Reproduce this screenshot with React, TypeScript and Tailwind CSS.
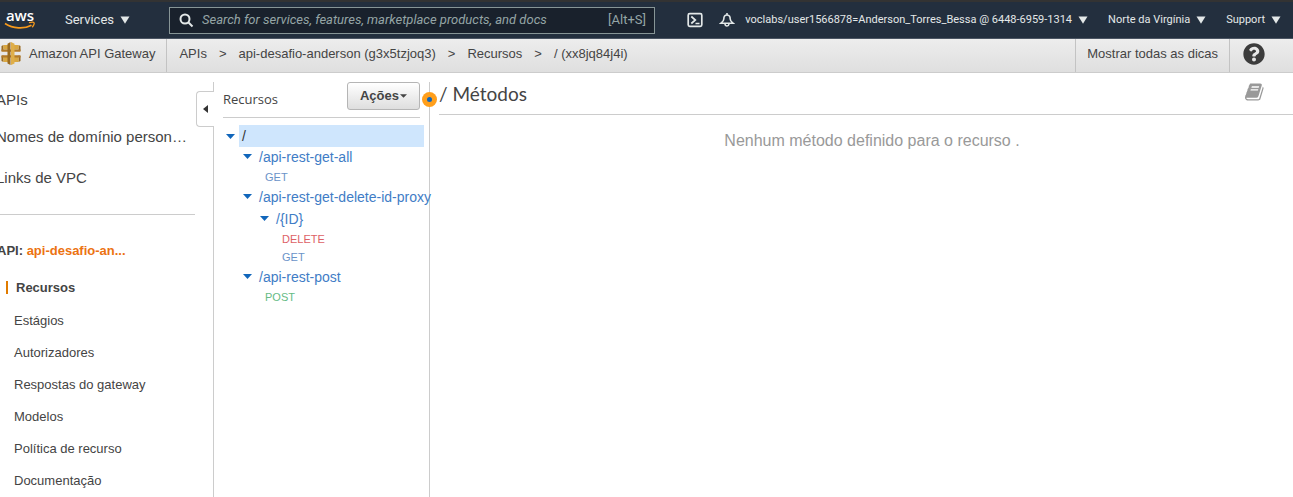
import { FaQuestionCircle } from "react-icons/fa";

type Resource = {
  kind: "resource";
  path: string;
  indent: string;
  selected?: boolean;
};
type Method = { kind: "method"; name: string; indent: string; color: string };
type TreeRow = Resource | Method;

const tree: TreeRow[] = [
  { kind: "resource", path: "/", indent: "pl-0", selected: true },
  { kind: "resource", path: "/api-rest-get-all", indent: "pl-[17px]" },
  { kind: "method", name: "GET", indent: "pl-[39px]", color: "text-[#6a93c8]" },
  { kind: "resource", path: "/api-rest-get-delete-id-proxy", indent: "pl-[17px]" },
  { kind: "resource", path: "/{ID}", indent: "pl-[34px]" },
  { kind: "method", name: "DELETE", indent: "pl-[56px]", color: "text-[#dd6166]" },
  { kind: "method", name: "GET", indent: "pl-[56px]", color: "text-[#6a93c8]" },
  { kind: "resource", path: "/api-rest-post", indent: "pl-[17px]" },
  { kind: "method", name: "POST", indent: "pl-[39px]", color: "text-[#66bb85]" },
];

const apiLinks = [
  "Estágios",
  "Autorizadores",
  "Respostas do gateway",
  "Modelos",
  "Política de recurso",
  "Documentação",
];

const crumbs = ["APIs", "api-desafio-anderson (g3x5tzjoq3)", "Recursos", "/ (xx8jq84j4i)"];

function Triangle() {
  return (
    <svg viewBox="0 0 10 8" className="h-2 w-[10px] fill-current" aria-hidden="true">
      <path d="M.5.5h9L5 7.8z" />
    </svg>
  );
}

function AwsLogo() {
  return (
    <a href="#" className="flex w-8 flex-col items-center font-['Open_Sans','Noto_Sans',sans-serif] text-[15px] leading-3 font-semibold text-white">
      <span>aws</span>
      <svg viewBox="0 0 32 10" className="h-[10px] w-8 fill-none stroke-[#f79a1c]" aria-hidden="true">
        <path d="M1 2.500C9 7.800 20 8.300 27.500 4.200" strokeWidth="1.700" />
        <path d="M25 1.700c2.500-.7 4.600-.7 5 0s-.3 2.900-1.700 4.500" strokeWidth="1.300" />
      </svg>
    </a>
  );
}

function GatewayIcon() {
  return (
    <svg viewBox="0 0 20 23" className="h-[23px] w-5 shrink-0" aria-hidden="true">
      <path fill="#9a6b21" d="M.5 4l2-1v6h-2zM.5 14l2-.5v6.500l-2-1zM19.500 4l-2-1v6h2zM19.500 14l-2-.5v6.500l2-1z" />
      <path fill="#d9a741" d="M2.500 3H7v4.500H2.500zM2.500 15H7v5H2.500zM13 3h4.500v4.500H13zM13 15h4.500v5H13z" />
      <path fill="#b27a29" d="M.5 7.500h19v2.300H.5zM.5 13.200h19v2.300H.5z" />
      <path fill="#9a6b21" d="M6.500 1.800L9.500 0v23l-3-1.500z" />
      <path fill="#dfae49" d="M10 0l3.500 1.800v19.700L10 23z" />
    </svg>
  );
}

function TopBar() {
  return (
    <header className="flex h-[39px] items-center border-t-2 border-b border-t-[#333] border-b-[#4b5563] bg-[#232f3e] pr-3 pl-1 font-[Roboto,sans-serif] text-[#e3e8e8]">
      <AwsLogo />
      <button type="button" className="ml-[29px] flex items-center gap-[6px] text-[13px]">
        Services <Triangle />
      </button>
      <div className="ml-[39px] flex h-[27px] max-w-[486px] flex-1 items-center border border-[#879596] bg-[#19212c] px-2 text-[#95a5a6]">
        <svg viewBox="0 0 16 16" className="mr-2 size-4 fill-none stroke-[#e3e8e8] stroke-2" aria-hidden="true">
          <circle cx="7" cy="7" r="4.500" />
          <path d="M10.500 10.500l4 4" />
        </svg>
        <input
          type="search"
          aria-label="Search"
          placeholder="Search for services, features, marketplace products, and docs"
          className="min-w-0 flex-1 bg-transparent text-[13px] text-white italic outline-none placeholder:text-[#95a5a6]"
        />
        <span className="text-[13px]">[Alt+S]</span>
      </div>
      <div className="ml-auto flex items-center text-[11px] whitespace-nowrap">
        <button type="button" aria-label="CloudShell" className="mr-4">
          <svg viewBox="0 0 16 16" className="size-4 fill-none stroke-current stroke-[1.700]">
            <rect x="1.200" y="1.700" width="13.600" height="12.600" rx="1.500" />
            <path d="M4.300 4.500l4 3.500-4 3.500M8.500 11.500h4" />
          </svg>
        </button>
        <button type="button" aria-label="Notifications" className="mr-[10px]">
          <svg viewBox="0 0 16 16" className="size-4 fill-none stroke-current stroke-[1.600]">
            <path d="M8 3C5.500 3 4.800 5 4.800 7c0 1.800-.6 2.600-2.800 4.200h12c-2.200-1.600-2.800-2.400-2.800-4.200 0-2-.7-4-3.200-4zM8 1v2M6 12c.3 2.600 3.700 2.600 4 0" />
          </svg>
        </button>
        <button type="button" className="flex items-center gap-[6px]">
          voclabs/user1566878=Anderson_Torres_Bessa @ 6448-6959-1314 <Triangle />
        </button>
        <button type="button" className="ml-5 flex items-center gap-[6px]">
          Norte da Virgínia <Triangle />
        </button>
        <button type="button" className="ml-5 flex items-center gap-[6px]">
          Support <Triangle />
        </button>
      </div>
    </header>
  );
}

function BreadcrumbBar() {
  return (
    <div className="flex h-[34px] items-stretch border-b border-[#ccc] bg-linear-to-b from-[#ededed] to-[#dfdfdf] text-[13px] whitespace-nowrap">
      <a href="#" className="flex items-center gap-2 border-r border-[#c3c3c3] pr-[11px] pb-1 pl-[1px]">
        <GatewayIcon />
        Amazon API Gateway
      </a>
      <nav aria-label="Trilha" className="flex items-center gap-3 pb-1 pl-3">
        {crumbs.map((crumb, i) => (
          <span key={crumb} className="flex items-center gap-3">
            {i > 0 && <span>&gt;</span>}
            <a href="#">{crumb}</a>
          </span>
        ))}
      </nav>
      <button type="button" className="ml-auto border-x border-[#c3c3c3] px-[11px] pb-1">
        Mostrar todas as dicas
      </button>
      <button type="button" aria-label="Ajuda" className="pr-[28px] pb-1 pl-[13px]">
        <FaQuestionCircle className="size-[22px] text-[#3c3c3c]" />
      </button>
    </div>
  );
}

function Sidebar() {
  return (
    <aside className="relative w-[214px] shrink-0 border-r border-[#ccc] text-[#444]">
      <nav className="-ml-1 flex w-[199px] flex-col border-b border-[#ccc] pb-[26px] text-[15px] leading-5">
        <a href="#" className="mt-2">APIs</a>
        <a href="#" className="mt-[17px] whitespace-nowrap">Nomes de domínio person…</a>
        <a href="#" className="mt-[21px]">Links de VPC</a>
      </nav>
      <h2 className="-ml-[3px] pt-[26px] text-[13px] leading-5 font-bold">
        API: <a href="#" className="text-[#ec7211]">api-desafio-an...</a>
      </h2>
      <ul className="mt-[10px] text-[13px]">
        <li className="flex h-8 items-center">
          <a href="#" className="ml-[6px] border-l-2 border-[#e07b00] pl-2 leading-[13px] font-bold">
            Recursos
          </a>
        </li>
        {apiLinks.map((label) => (
          <li key={label} className="flex h-8 items-center pt-[3px] pl-[14px]">
            <a href="#">{label}</a>
          </li>
        ))}
      </ul>
      <button
        type="button"
        aria-label="Recolher menu"
        className="absolute top-[9px] -right-px flex h-9 w-[18px] items-center justify-center rounded-l border border-r-0 border-[#ccc] bg-white"
      >
        <svg viewBox="0 0 5 8" className="h-2 w-[5px] fill-[#333]">
          <path d="M5 0v8L0 4z" />
        </svg>
      </button>
    </aside>
  );
}

function ResourceTree() {
  return (
    <section className="relative w-[216px] shrink-0 border-r border-[#ccc] pl-[9px]">
      <div className="mr-[9px] flex h-9 justify-between border-b border-[#ccc]">
        <h2 className="pt-2 font-['Open_Sans','Noto_Sans',sans-serif] text-[13px] leading-[18px]">Recursos</h2>
        <button
          type="button"
          className="flex h-7 w-[73px] items-center justify-center gap-px rounded-[3px] border border-[#b5b5b5] bg-linear-to-b from-white to-[#dedede] text-[13px] font-bold"
        >
          Ações
          <svg viewBox="0 0 8 4" className="h-1 w-[7px] fill-current" aria-hidden="true">
            <path d="M0 0h8L4 4z" />
          </svg>
        </button>
      </div>
      <span className="absolute top-[10px] -right-[8px] flex size-[15px] items-center justify-center rounded-full bg-[#ff9f1c]">
        <span className="size-[5px] rounded-full bg-[#1166bb]" />
      </span>
      <ul className="mt-[7px] pl-[3px] whitespace-nowrap">
        {tree.map((row, i) =>
          row.kind === "resource" ? (
            <li key={i} className={`flex h-[22px] items-center ${row.selected ? "" : "pb-[3px]"} ${row.indent}`}>
              <svg viewBox="0 0 9 5" className="mr-1 h-[5px] w-[9px] shrink-0 fill-[#1166bb]" aria-hidden="true">
                <path d="M0 0h9L4.500 5z" />
              </svg>
              <a
                href="#"
                className={
                  row.selected
                    ? "mr-[5px] flex-1 bg-[#cfe6fd] pl-[3px] text-[14px] leading-[22px] text-[#333]"
                    : "pl-[3px] text-[14px] leading-5 text-[#3f7dc6]"
                }
              >
                {row.path}
              </a>
            </li>
          ) : (
            <li key={i} className={`h-[18px] text-[11px] leading-4 ${row.indent} ${row.color}`}>
              <a href="#">{row.name}</a>
            </li>
          ),
        )}
      </ul>
    </section>
  );
}

function Methods() {
  return (
    <main className="min-w-0 flex-1 pl-[9px]">
      <div className="flex h-[33px] items-start justify-between border-b border-[#ccc] pr-7">
        <h1 className="font-[Lato,sans-serif] text-[19px] leading-6">/ Métodos</h1>
        <button type="button" aria-label="Documentação" className="h-5">
          <svg viewBox="0 0 1792 1792" className="size-5 fill-[#999]">
            <path d="M1639 478q40 57 18 129l-275 906q-19 64-76.500 107.500t-122.500 43.500h-923q-77 0-148.500-53.500t-99.500-131.500q-24-67-2-127 0-4 3-27t4-37q1-8-3-21.500t-3-19.500q2-11 8-21t16.500-23.500 16.500-23.500q23-38 45-91.500t30-91.500q3-10 .5-30t-.5-28q3-11 17-28t17-23q21-36 42-92t25-90q1-9-2.500-32t.5-28q4-13 22-30.500t22-22.500q19-26 42.500-84.500t27.500-96.500q1-8-3-25.500t-2-26.500q2-8 9-18t18-23 17-21q8-12 16.500-30.500t15-35 16-36 19.500-32 26.500-23.500 36-11.500 47.500 5.500l-1 3q38-9 51-9h761q74 0 114 56t18 130l-274 906q-36 119-71.500 153.500t-128.500 34.500h-869q-27 0-38 15-11 16-1 43 24 70 144 70h923q29 0 56-15.500t35-41.500l300-987q7-22 5-57 38 15 59 43zm-1064 2q-4 13 2 22.500t20 9.500h608q13 0 25.500-9.500t16.500-22.500l21-64q4-13-2-22.500t-20-9.500h-608q-13 0-25.500 9.500t-16.500 22.500zm-83 256q-4 13 2 22.500t20 9.500h608q13 0 25.500-9.500t16.500-22.500l21-64q4-13-2-22.500t-20-9.500h-608q-13 0-25.500 9.500t-16.500 22.500z" />
          </svg>
        </button>
      </div>
      <p className="pt-[14px] pl-3 text-center text-[16px] text-[#999]">Nenhum método definido para o recurso .</p>
    </main>
  );
}

export default function App() {
  return (
    <div className="flex min-h-screen flex-col overflow-x-hidden bg-white font-['Liberation_Sans',Arial,sans-serif] text-[#444]">
      <TopBar />
      <BreadcrumbBar />
      <div className="mt-[9px] flex flex-1">
        <Sidebar />
        <ResourceTree />
        <Methods />
      </div>
    </div>
  );
}
